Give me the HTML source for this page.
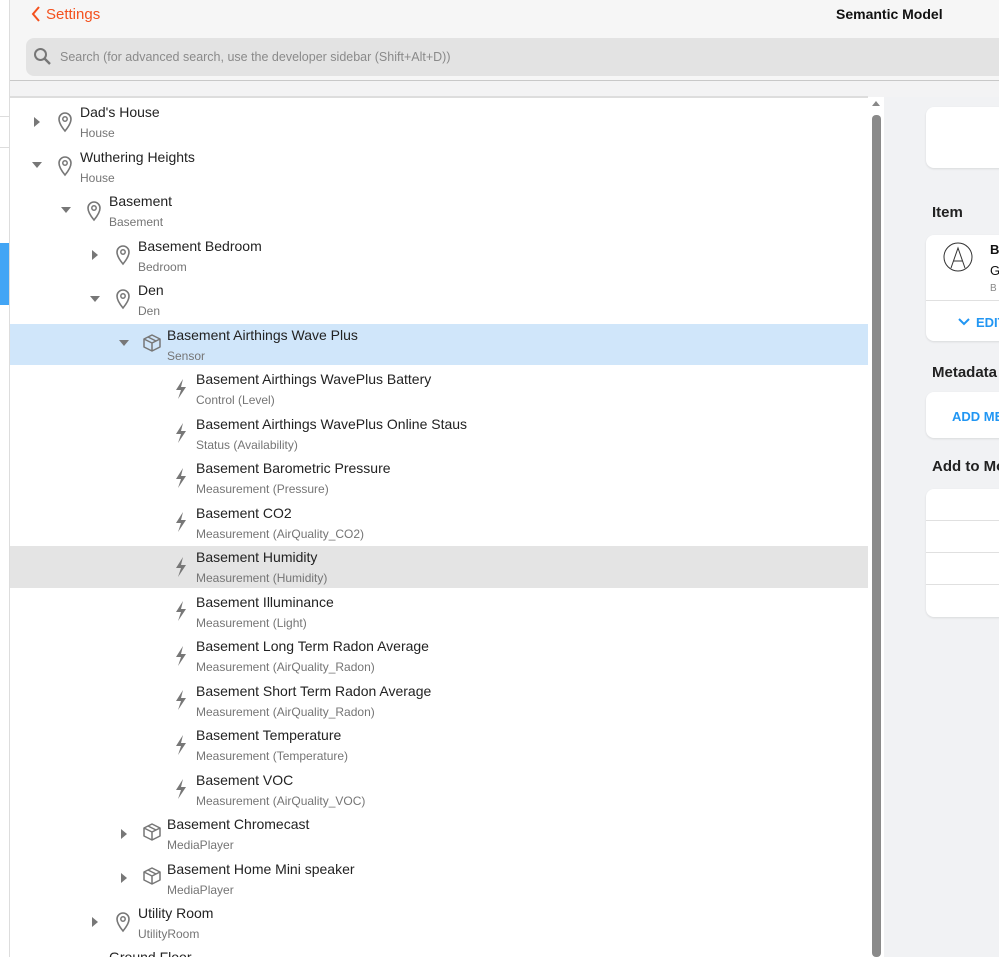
<!DOCTYPE html>
<html><head><meta charset="utf-8"><style>
*{margin:0;padding:0;box-sizing:border-box}
html,body{width:999px;height:957px;overflow:hidden}
body{position:relative;background:#f1f2f4;font-family:"Liberation Sans","DejaVu Sans",sans-serif}
.abs{position:absolute}
.t{position:absolute;font-size:14px;color:#222;white-space:nowrap;line-height:17px;margin-top:1px}
.s{position:absolute;font-size:12px;color:#757575;white-space:nowrap;line-height:15px;margin-top:1px}
svg{position:absolute}
</style></head><body>
<div class="abs" style="left:0;top:0;width:10px;height:957px;background:#fff;border-right:1px solid #ddd"></div>
<div class="abs" style="left:0;top:116px;width:9px;height:1px;background:#ddd"></div>
<div class="abs" style="left:0;top:147px;width:9px;height:1px;background:#ddd"></div>
<div class="abs" style="left:0;top:243px;width:9px;height:62px;background:#42a5f5"></div>
<div class="abs" style="left:10px;top:0;width:989px;height:81px;background:#f6f6f6;border-bottom:1px solid #c8c8c8"></div>
<svg style="left:30px;top:5px" width="12" height="18" viewBox="0 0 12 18"><path d="M9 2 L3 9 L9 16" stroke="#f4511e" stroke-width="2" fill="none"/></svg>
<div class="abs" style="left:46px;top:6px;font-size:15px;color:#f4511e;line-height:18px">Settings</div>
<div class="abs" style="left:836px;top:6px;font-size:14px;font-weight:bold;color:#111;line-height:17px">Semantic Model</div>
<div class="abs" style="left:26px;top:38px;width:990px;height:38px;background:#e3e3e3;border-radius:8px"></div>
<svg style="left:33px;top:47px" width="20" height="20" viewBox="0 0 20 20"><circle cx="7.5" cy="7.5" r="5.5" stroke="#777" stroke-width="2" fill="none"/><path d="M11.5 11.5 L17 17" stroke="#777" stroke-width="2.4"/></svg>
<div class="abs" style="left:60px;top:50px;font-size:12.5px;color:#8a8a8a;line-height:15px">Search (for advanced search, use the developer sidebar (Shift+Alt+D))</div>
<div class="abs" style="left:10px;top:81px;width:989px;height:16px;background:#f3f3f4"></div>
<div class="abs" style="left:10px;top:96px;width:858px;height:861px;background:#fff;border-top:2px solid #ddd"></div>
<div class="abs" style="left:868px;top:97px;width:16px;height:860px;background:#fff"></div>
<svg style="left:871px;top:99px" width="10" height="8"><path d="M1 7 L5 2 L9 7Z" fill="#888"/></svg>
<div class="abs" style="left:872px;top:115px;width:9px;height:842px;background:#8a8a8a;border-radius:4px"></div>
<div class="abs" style="left:10px;top:324px;width:858px;height:41px;background:#d0e6fa"></div>
<div class="abs" style="left:10px;top:546px;width:858px;height:42px;background:#e4e4e4"></div>

<svg style="left:33px;top:116px" width="8" height="12"><path d="M1 1 L7 6 L1 11Z" fill="#777"/></svg>
<svg style="left:56px;top:111px" width="18" height="22" viewBox="0 0 18 22"><path d="M9 20 C4 14 3 11 3 8 A6 6 0 0 1 15 8 C15 11 14 14 9 20Z" stroke="#777" stroke-width="1.6" fill="none"/><circle cx="9" cy="8" r="2.2" stroke="#777" stroke-width="1.5" fill="none"/></svg>
<div class="t" style="left:80px;top:103px">Dad's House</div><div class="s" style="left:80px;top:125px">House</div>

<svg style="left:31px;top:161px" width="12" height="8"><path d="M1 1 L11 1 L6 7Z" fill="#777"/></svg>
<svg style="left:56px;top:155px" width="18" height="22" viewBox="0 0 18 22"><path d="M9 20 C4 14 3 11 3 8 A6 6 0 0 1 15 8 C15 11 14 14 9 20Z" stroke="#777" stroke-width="1.6" fill="none"/><circle cx="9" cy="8" r="2.2" stroke="#777" stroke-width="1.5" fill="none"/></svg>
<div class="t" style="left:80px;top:148px">Wuthering Heights</div><div class="s" style="left:80px;top:170px">House</div>

<svg style="left:60px;top:206px" width="12" height="8"><path d="M1 1 L11 1 L6 7Z" fill="#777"/></svg>
<svg style="left:85px;top:200px" width="18" height="22" viewBox="0 0 18 22"><path d="M9 20 C4 14 3 11 3 8 A6 6 0 0 1 15 8 C15 11 14 14 9 20Z" stroke="#777" stroke-width="1.6" fill="none"/><circle cx="9" cy="8" r="2.2" stroke="#777" stroke-width="1.5" fill="none"/></svg>
<div class="t" style="left:109px;top:192px">Basement</div><div class="s" style="left:109px;top:214px">Basement</div>

<svg style="left:91px;top:249px" width="8" height="12"><path d="M1 1 L7 6 L1 11Z" fill="#777"/></svg>
<svg style="left:114px;top:244px" width="18" height="22" viewBox="0 0 18 22"><path d="M9 20 C4 14 3 11 3 8 A6 6 0 0 1 15 8 C15 11 14 14 9 20Z" stroke="#777" stroke-width="1.6" fill="none"/><circle cx="9" cy="8" r="2.2" stroke="#777" stroke-width="1.5" fill="none"/></svg>
<div class="t" style="left:138px;top:237px">Basement Bedroom</div><div class="s" style="left:138px;top:259px">Bedroom</div>

<svg style="left:89px;top:295px" width="12" height="8"><path d="M1 1 L11 1 L6 7Z" fill="#777"/></svg>
<svg style="left:114px;top:288px" width="18" height="22" viewBox="0 0 18 22"><path d="M9 20 C4 14 3 11 3 8 A6 6 0 0 1 15 8 C15 11 14 14 9 20Z" stroke="#777" stroke-width="1.6" fill="none"/><circle cx="9" cy="8" r="2.2" stroke="#777" stroke-width="1.5" fill="none"/></svg>
<div class="t" style="left:138px;top:281px">Den</div><div class="s" style="left:138px;top:303px">Den</div>

<svg style="left:118px;top:339px" width="12" height="8"><path d="M1 1 L11 1 L6 7Z" fill="#777"/></svg>
<svg style="left:142px;top:333px" width="20" height="20" viewBox="0 0 20 20"><path d="M10 2 L18 6 L18 14 L10 18 L2 14 L2 6Z M2 6 L10 10 L18 6 M10 10 L10 18 M6 4 L14 8" stroke="#777" stroke-width="1.5" fill="none" stroke-linejoin="round"/></svg>
<div class="t" style="left:167px;top:326px">Basement Airthings Wave Plus</div><div class="s" style="left:167px;top:348px">Sensor</div>

<svg style="left:172px;top:378px" width="18" height="22" viewBox="0 0 18 22"><path d="M11 1 L4 12 L9 12 L6 21 L14 9 L9 9Z" fill="#777"/></svg>
<div class="t" style="left:196px;top:370px">Basement Airthings WavePlus Battery</div><div class="s" style="left:196px;top:392px">Control (Level)</div>
<svg style="left:172px;top:422px" width="18" height="22" viewBox="0 0 18 22"><path d="M11 1 L4 12 L9 12 L6 21 L14 9 L9 9Z" fill="#777"/></svg>
<div class="t" style="left:196px;top:415px">Basement Airthings WavePlus Online Staus</div><div class="s" style="left:196px;top:437px">Status (Availability)</div>
<svg style="left:172px;top:467px" width="18" height="22" viewBox="0 0 18 22"><path d="M11 1 L4 12 L9 12 L6 21 L14 9 L9 9Z" fill="#777"/></svg>
<div class="t" style="left:196px;top:459px">Basement Barometric Pressure</div><div class="s" style="left:196px;top:481px">Measurement (Pressure)</div>
<svg style="left:172px;top:511px" width="18" height="22" viewBox="0 0 18 22"><path d="M11 1 L4 12 L9 12 L6 21 L14 9 L9 9Z" fill="#777"/></svg>
<div class="t" style="left:196px;top:504px">Basement CO2</div><div class="s" style="left:196px;top:526px">Measurement (AirQuality_CO2)</div>
<svg style="left:172px;top:556px" width="18" height="22" viewBox="0 0 18 22"><path d="M11 1 L4 12 L9 12 L6 21 L14 9 L9 9Z" fill="#777"/></svg>
<div class="t" style="left:196px;top:548px">Basement Humidity</div><div class="s" style="left:196px;top:570px">Measurement (Humidity)</div>
<svg style="left:172px;top:600px" width="18" height="22" viewBox="0 0 18 22"><path d="M11 1 L4 12 L9 12 L6 21 L14 9 L9 9Z" fill="#777"/></svg>
<div class="t" style="left:196px;top:593px">Basement Illuminance</div><div class="s" style="left:196px;top:615px">Measurement (Light)</div>
<svg style="left:172px;top:645px" width="18" height="22" viewBox="0 0 18 22"><path d="M11 1 L4 12 L9 12 L6 21 L14 9 L9 9Z" fill="#777"/></svg>
<div class="t" style="left:196px;top:637px">Basement Long Term Radon Average</div><div class="s" style="left:196px;top:659px">Measurement (AirQuality_Radon)</div>
<svg style="left:172px;top:689px" width="18" height="22" viewBox="0 0 18 22"><path d="M11 1 L4 12 L9 12 L6 21 L14 9 L9 9Z" fill="#777"/></svg>
<div class="t" style="left:196px;top:682px">Basement Short Term Radon Average</div><div class="s" style="left:196px;top:704px">Measurement (AirQuality_Radon)</div>
<svg style="left:172px;top:734px" width="18" height="22" viewBox="0 0 18 22"><path d="M11 1 L4 12 L9 12 L6 21 L14 9 L9 9Z" fill="#777"/></svg>
<div class="t" style="left:196px;top:726px">Basement Temperature</div><div class="s" style="left:196px;top:748px">Measurement (Temperature)</div>
<svg style="left:172px;top:778px" width="18" height="22" viewBox="0 0 18 22"><path d="M11 1 L4 12 L9 12 L6 21 L14 9 L9 9Z" fill="#777"/></svg>
<div class="t" style="left:196px;top:771px">Basement VOC</div><div class="s" style="left:196px;top:793px">Measurement (AirQuality_VOC)</div>

<svg style="left:120px;top:828px" width="8" height="12"><path d="M1 1 L7 6 L1 11Z" fill="#777"/></svg>
<svg style="left:142px;top:822px" width="20" height="20" viewBox="0 0 20 20"><path d="M10 2 L18 6 L18 14 L10 18 L2 14 L2 6Z M2 6 L10 10 L18 6 M10 10 L10 18 M6 4 L14 8" stroke="#777" stroke-width="1.5" fill="none" stroke-linejoin="round"/></svg>
<div class="t" style="left:167px;top:815px">Basement Chromecast</div><div class="s" style="left:167px;top:837px">MediaPlayer</div>
<svg style="left:120px;top:872px" width="8" height="12"><path d="M1 1 L7 6 L1 11Z" fill="#777"/></svg>
<svg style="left:142px;top:866px" width="20" height="20" viewBox="0 0 20 20"><path d="M10 2 L18 6 L18 14 L10 18 L2 14 L2 6Z M2 6 L10 10 L18 6 M10 10 L10 18 M6 4 L14 8" stroke="#777" stroke-width="1.5" fill="none" stroke-linejoin="round"/></svg>
<div class="t" style="left:167px;top:860px">Basement Home Mini speaker</div><div class="s" style="left:167px;top:882px">MediaPlayer</div>
<svg style="left:91px;top:916px" width="8" height="12"><path d="M1 1 L7 6 L1 11Z" fill="#777"/></svg>
<svg style="left:114px;top:911px" width="18" height="22" viewBox="0 0 18 22"><path d="M9 20 C4 14 3 11 3 8 A6 6 0 0 1 15 8 C15 11 14 14 9 20Z" stroke="#777" stroke-width="1.6" fill="none"/><circle cx="9" cy="8" r="2.2" stroke="#777" stroke-width="1.5" fill="none"/></svg>
<div class="t" style="left:138px;top:904px">Utility Room</div><div class="s" style="left:138px;top:926px">UtilityRoom</div>
<div class="t" style="left:109px;top:948px">Ground Floor</div>

<div class="abs" style="left:926px;top:107px;width:90px;height:61px;background:#fff;border-radius:8px;box-shadow:0 1px 2px rgba(0,0,0,.1)"></div>
<div class="abs" style="left:932px;top:204px;font-size:15px;font-weight:bold;color:#222">Item</div>
<div class="abs" style="left:926px;top:235px;width:90px;height:106px;background:#fff;border-radius:8px;box-shadow:0 1px 2px rgba(0,0,0,.1)"></div>
<svg style="left:942px;top:241px" width="32" height="32" viewBox="0 0 32 32"><circle cx="16" cy="16" r="14" stroke="#333" stroke-width="1" fill="none"/><path d="M9 27 L16 7 L23 27 M11.5 20 L20.5 20" stroke="#333" stroke-width="1" fill="none"/></svg>
<div class="abs" style="left:990px;top:242px;font-size:13px;font-weight:bold;color:#111">B</div>
<div class="abs" style="left:990px;top:263px;font-size:13px;color:#111">G</div>
<div class="abs" style="left:990px;top:283px;font-size:10px;color:#888">B</div>
<div class="abs" style="left:926px;top:300px;width:73px;height:1px;background:#e0e0e0"></div>
<svg style="left:957px;top:317px" width="14" height="10"><path d="M2 2 L7 7 L12 2" stroke="#2196f3" stroke-width="2" fill="none"/></svg>
<div class="abs" style="left:976px;top:315px;font-size:13px;font-weight:bold;color:#2196f3">EDIT</div>
<div class="abs" style="left:932px;top:364px;font-size:15px;font-weight:bold;color:#222">Metadata</div>
<div class="abs" style="left:926px;top:392px;width:90px;height:46px;background:#fff;border-radius:8px;box-shadow:0 1px 2px rgba(0,0,0,.1)"></div>
<div class="abs" style="left:952px;top:409px;font-size:13px;font-weight:bold;color:#2196f3;white-space:nowrap">ADD META</div>
<div class="abs" style="left:932px;top:458px;font-size:15px;font-weight:bold;color:#222;white-space:nowrap">Add to Model</div>
<div class="abs" style="left:926px;top:489px;width:90px;height:128px;background:#fff;border-radius:8px;box-shadow:0 1px 2px rgba(0,0,0,.1)"></div>
<div class="abs" style="left:926px;top:520px;width:73px;height:1px;background:#e0e0e0"></div>
<div class="abs" style="left:926px;top:552px;width:73px;height:1px;background:#e0e0e0"></div>
<div class="abs" style="left:926px;top:584px;width:73px;height:1px;background:#e0e0e0"></div>
</body></html>
